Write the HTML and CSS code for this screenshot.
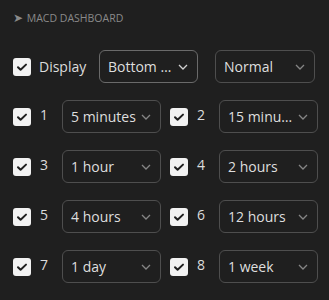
FILE: index.html
```html
<!DOCTYPE html>
<html lang="en">
<head>
  <meta charset="UTF-8" />
  <title>MACD Dashboard</title>
  <link rel="stylesheet" href="styles.css">
</head>
<body>
  <div class="panel">
    <div class="title"><span class="arrow">➤</span> MACD DASHBOARD</div>

    <div class="display-row">
      <label class="check-label">
        <span class="box"><svg viewBox="0 0 18 18"><path d="M5 9.2l2.6 2.6L13 6.6" /></svg></span>
        <span class="label-text">Display</span>
      </label>
      <div class="select active">
        <span class="value">Bottom …</span>
        <svg class="chev" viewBox="0 0 10 6"><path d="M1 1l4 4 4-4" /></svg>
      </div>
      <div class="select wide">
        <span class="value">Normal</span>
        <svg class="chev" viewBox="0 0 10 6"><path d="M1 1l4 4 4-4" /></svg>
      </div>
    </div>

    <div class="grid">
      <div class="item">
        <span class="box"><svg viewBox="0 0 18 18"><path d="M5 9.2l2.6 2.6L13 6.6" /></svg></span>
        <span class="num">1</span>
        <div class="select"><span class="value">5 minutes</span><svg class="chev" viewBox="0 0 10 6"><path d="M1 1l4 4 4-4" /></svg></div>
      </div>
      <div class="item">
        <span class="box"><svg viewBox="0 0 18 18"><path d="M5 9.2l2.6 2.6L13 6.6" /></svg></span>
        <span class="num">2</span>
        <div class="select"><span class="value">15 minu…</span><svg class="chev" viewBox="0 0 10 6"><path d="M1 1l4 4 4-4" /></svg></div>
      </div>
      <div class="item">
        <span class="box"><svg viewBox="0 0 18 18"><path d="M5 9.2l2.6 2.6L13 6.6" /></svg></span>
        <span class="num">3</span>
        <div class="select"><span class="value">1 hour</span><svg class="chev" viewBox="0 0 10 6"><path d="M1 1l4 4 4-4" /></svg></div>
      </div>
      <div class="item">
        <span class="box"><svg viewBox="0 0 18 18"><path d="M5 9.2l2.6 2.6L13 6.6" /></svg></span>
        <span class="num">4</span>
        <div class="select"><span class="value">2 hours</span><svg class="chev" viewBox="0 0 10 6"><path d="M1 1l4 4 4-4" /></svg></div>
      </div>
      <div class="item">
        <span class="box"><svg viewBox="0 0 18 18"><path d="M5 9.2l2.6 2.6L13 6.6" /></svg></span>
        <span class="num">5</span>
        <div class="select"><span class="value">4 hours</span><svg class="chev" viewBox="0 0 10 6"><path d="M1 1l4 4 4-4" /></svg></div>
      </div>
      <div class="item">
        <span class="box"><svg viewBox="0 0 18 18"><path d="M5 9.2l2.6 2.6L13 6.6" /></svg></span>
        <span class="num">6</span>
        <div class="select"><span class="value">12 hours</span><svg class="chev" viewBox="0 0 10 6"><path d="M1 1l4 4 4-4" /></svg></div>
      </div>
      <div class="item">
        <span class="box"><svg viewBox="0 0 18 18"><path d="M5 9.2l2.6 2.6L13 6.6" /></svg></span>
        <span class="num">7</span>
        <div class="select"><span class="value">1 day</span><svg class="chev" viewBox="0 0 10 6"><path d="M1 1l4 4 4-4" /></svg></div>
      </div>
      <div class="item">
        <span class="box"><svg viewBox="0 0 18 18"><path d="M5 9.2l2.6 2.6L13 6.6" /></svg></span>
        <span class="num">8</span>
        <div class="select"><span class="value">1 week</span><svg class="chev" viewBox="0 0 10 6"><path d="M1 1l4 4 4-4" /></svg></div>
      </div>
    </div>
  </div>
</body>
</html>
```

FILE: styles.css
```css
body {
  margin: 0;
  background: #1f1f1f;
  color: #dcdcdc;
  font-family: 'Open Sans', sans-serif;
  width: 329px;
  height: 300px;
  overflow: hidden;
}

.panel {
  padding: 10px 0 0 13px;
}

.title {
  font-size: 10.5px;
  color: #8a8a8a;
  height: 16px;
  line-height: 16px;
}

.arrow {
  font-family: 'DejaVu Sans', sans-serif;
  font-size: 12px;
  margin-right: 1px;
}

.display-row {
  margin-top: 24px;
  display: flex;
  align-items: center;
  height: 33px;
}

.check-label {
  display: flex;
  align-items: center;
  width: 86px;
}

.box {
  width: 18px;
  height: 18px;
  background: #f2f2f2;
  border-radius: 3px;
  flex-shrink: 0;
  display: block;
}

.box svg {
  width: 18px;
  height: 18px;
  display: block;
}

.box path {
  fill: none;
  stroke: #1f1f1f;
  stroke-width: 2;
  stroke-linecap: round;
  stroke-linejoin: round;
}

.label-text {
  margin-left: 8px;
  font-size: 14px;
}

.select {
  box-sizing: border-box;
  width: 99px;
  height: 33px;
  border: 1px solid #4e4e4e;
  border-radius: 6px;
  display: flex;
  align-items: center;
  justify-content: space-between;
  padding: 0 9px 0 8px;
  font-size: 14px;
  color: #dedede;
}

.select.active {
  border-color: #6a6a6a;
}

.select.wide {
  width: 100px;
  margin-left: 17px;
}

.value {
  white-space: nowrap;
}

.chev {
  width: 10px;
  height: 6px;
  flex-shrink: 0;
}

.chev path {
  fill: none;
  stroke: #858585;
  stroke-width: 1.3;
}

.select.active .chev path {
  stroke: #d0d0d0;
}

.grid {
  display: grid;
  grid-template-columns: 157px 149px;
  row-gap: 17px;
  margin-top: 17px;
}

.item {
  display: flex;
  align-items: center;
  height: 33px;
}

.num {
  flex-shrink: 0;
  width: 31px;
  padding-left: 9px;
  box-sizing: border-box;
  font-size: 14px;
  align-self: flex-start;
  margin-top: 5px;
}
```
